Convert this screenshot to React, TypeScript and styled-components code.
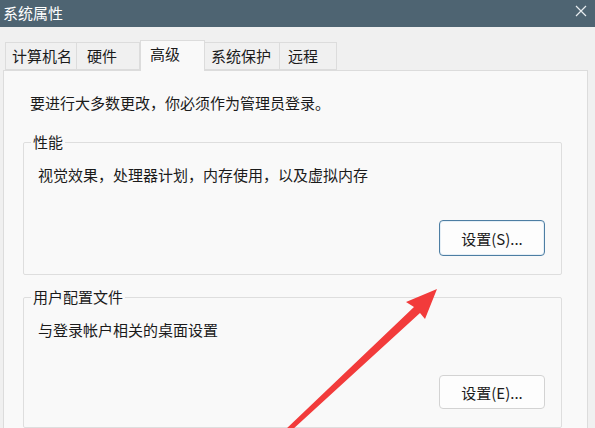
import styled, { createGlobalStyle } from 'styled-components'

const GlobalStyle = createGlobalStyle`
  html, body {
    margin: 0;
    padding: 0;
    background: #f0f0f0;
    overflow: hidden;
  }
  body {
    font-family: "Noto Sans CJK SC", "Noto Sans", sans-serif;
    color: #1b1b1b;
  }
`

const Window = styled.div`
  position: relative;
  width: 595px;
  height: 428px;
  display: flex;
  flex-direction: column;
  background: #f0f0f0;
  overflow: hidden;
`

const TitleBar = styled.div`
  height: 27px;
  flex: none;
  display: flex;
  align-items: center;
  justify-content: space-between;
  padding: 0 8px 2px 3px;
  background: #4e6472;
  color: #ffffff;
  font-size: 15px;
  box-sizing: border-box;
`

const CloseButton = styled.div`
  display: flex;
  align-items: center;
  margin-top: -4px;
  color: #e8edf0;
`

const TabRow = styled.div`
  display: flex;
  align-items: flex-end;
  height: 30px;
  margin-top: 13px;
  padding-left: 5px;
  box-sizing: border-box;
`

const Tab = styled.div<{ $width: number; $pad: number; $active?: boolean }>`
  width: ${(p) => p.$width}px;
  height: ${(p) => (p.$active ? 31 : 28)}px;
  margin-bottom: ${(p) => (p.$active ? -1 : 0)}px;
  box-sizing: border-box;
  display: flex;
  align-items: center;
  padding-left: ${(p) => p.$pad}px;
  padding-bottom: ${(p) => (p.$active ? 5 : 1)}px;
  font-size: 15px;
  background: ${(p) => (p.$active ? '#f9f9f9' : '#f0f0f0')};
  border: 1px solid #dcdcdc;
  border-bottom: ${(p) => (p.$active ? 'none' : '1px solid #dcdcdc')};
  border-left: ${(p) => (p.$active ? '1px solid #dcdcdc' : 'none')};
  position: relative;
  z-index: ${(p) => (p.$active ? 1 : 0)};
  &:first-child {
    border-left: 1px solid #dcdcdc;
  }
`

const Panel = styled.div`
  flex: 1;
  margin: 0 7px 0 3px;
  border: 1px solid #dcdcdc;
  background: #f9f9f9;
  padding: 22px 25px 0 19px;
  display: flex;
  flex-direction: column;
`

const Intro = styled.div`
  font-size: 15px;
  line-height: 20px;
  padding-left: 7px;
  margin-bottom: 19px;
`

const Group = styled.fieldset`
  margin: 0 0 12px 0;
  padding: 0 16px 18px 7px;
  border: 1px solid #dedede;
  border-radius: 2px;
  display: flex;
  flex-direction: column;
`

const Legend = styled.legend`
  padding: 0 2px;
  font-size: 15px;
  line-height: 20px;
`

const GroupText = styled.div`
  font-size: 15px;
  line-height: 20px;
  padding: 13px 0 0 7px;
`

const Button = styled.button<{ $focused?: boolean }>`
  align-self: flex-end;
  width: 106px;
  height: ${(p) => (p.$focused ? 36 : 34)}px;
  margin-top: 35px;
  border-radius: 4px;
  border: 1px solid ${(p) => (p.$focused ? '#4d7ea3' : '#d3d3d3')};
  box-shadow: ${(p) => (p.$focused ? 'inset 0 0 0 1px #e6eff6' : 'none')};
  background: #fdfdfd;
  font-family: "Noto Sans CJK SC", "Noto Sans", sans-serif;
  font-size: 15px;
  color: #1b1b1b;
  padding: 0;
`

const Annotation = styled.svg`
  position: absolute;
  left: 0;
  top: 0;
  pointer-events: none;
`

export default function App() {
  return (
    <>
      <GlobalStyle />
      <Window>
        <TitleBar>
          <span>系统属性</span>
          <CloseButton>
            <svg width="12" height="12" viewBox="0 0 12 12">
              <path d="M1 1 L11 11 M11 1 L1 11" stroke="currentColor" strokeWidth="1.2" />
            </svg>
          </CloseButton>
        </TitleBar>
        <TabRow>
          <Tab $width={72} $pad={6}>计算机名</Tab>
          <Tab $width={63} $pad={10}>硬件</Tab>
          <Tab $width={65} $pad={9} $active>高级</Tab>
          <Tab $width={75} $pad={6}>系统保护</Tab>
          <Tab $width={57} $pad={8}>远程</Tab>
        </TabRow>
        <Panel>
          <Intro>要进行大多数更改，你必须作为管理员登录。</Intro>
          <Group>
            <Legend>性能</Legend>
            <GroupText>视觉效果，处理器计划，内存使用，以及虚拟内存</GroupText>
            <Button $focused>设置(S)...</Button>
          </Group>
          <Group>
            <Legend>用户配置文件</Legend>
            <GroupText>与登录帐户相关的桌面设置</GroupText>
            <Button>设置(E)...</Button>
          </Group>
        </Panel>
        <Annotation width="595" height="428" viewBox="0 0 595 428">
          <polygon
            points="437,289 406,302 414,307 285,430 292,430 420,313 425,319"
            fill="#f23b3b"
          />
        </Annotation>
      </Window>
    </>
  )
}
